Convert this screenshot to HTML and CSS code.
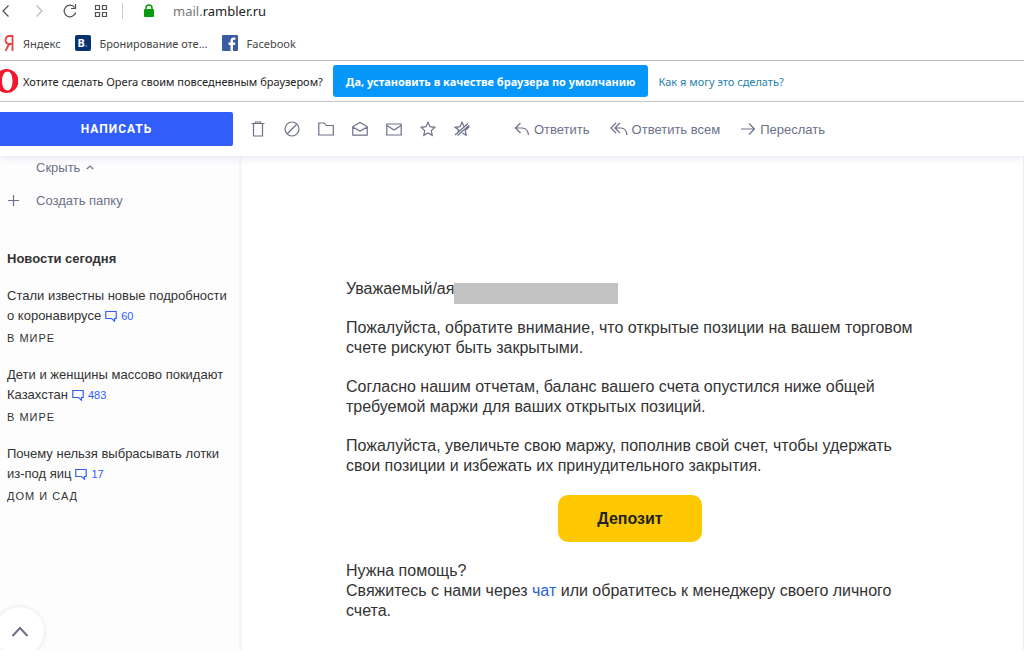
FILE: index.html
```html
<!DOCTYPE html>
<html lang="ru">
<head>
<meta charset="utf-8">
<title>Рамблер/почта</title>
<link rel="stylesheet" href="styles.css">
</head>
<body>
<header class="browser">
  <nav class="address-bar" aria-label="Навигация">
    <button class="nav-btn" aria-label="Назад"><svg width="14" height="16" viewBox="0 0 14 16"><path d="M8.500 2.500 3 8l5.500 5.500"/></svg></button>
    <button class="nav-btn nav-btn-off" aria-label="Вперёд"><svg width="14" height="16" viewBox="0 0 14 16"><path d="M4.500 2.500 10 8l-5.500 5.500"/></svg></button>
    <button class="nav-btn" aria-label="Обновить"><svg width="16" height="16" viewBox="0 0 16 16"><path d="M12.600 4.500A5.800 5.800 0 1 0 13.600 9.500M13.500 1v4.500H9"/></svg></button>
    <button class="nav-btn" aria-label="Экспресс-панель"><svg width="14" height="16" viewBox="0 0 14 16"><path d="M1.500 2.500h4v4h-4zM8.500 2.500h4v4h-4zM1.500 9.500h4v4h-4zM8.500 9.500h4v4h-4z"/></svg></button>
    <span class="divider"></span>
    <svg class="lock" width="12" height="16" viewBox="0 0 12 16"><path d="M3 7V5a3 3 0 0 1 6 0v2" fill="none" stroke="#0a9a0f" stroke-width="1.500"/><rect x="1" y="6" width="10" height="8" rx="1" fill="#0a9a0f"/></svg>
    <span class="url"><span class="url-sub">mail.</span>rambler.ru</span>
  </nav>
  <nav class="bookmarks" aria-label="Закладки">
    <a class="bookmark" href="#"><svg width="10" height="16" viewBox="0 0 10 16"><path d="M8.500 16V1H5.500C3 1 1.500 2.600 1.500 5s1.300 4 4 4h3M5 9 1.500 16" fill="none" stroke="#e8403a" stroke-width="1.800"/></svg>Яндекс</a>
    <a class="bookmark" href="#"><span class="booking">B<i>.</i></span>Бронирование оте...</a>
    <a class="bookmark" href="#"><svg width="16" height="16" viewBox="0 0 16 16"><rect width="16" height="16" rx="1" fill="#3b5ba5"/><path d="M8.500 16v-6H6.600V7.500h1.900V5.600C8.500 3.500 9.800 2.500 11.700 2.500h1.700v2.300h-1.200c-.9 0-1.200.4-1.200 1.200v1.500h2.300L13 10h-2v6z" fill="#fff"/></svg>Facebook</a>
  </nav>
  <div class="prompt">
    <svg class="opera" width="18" height="24" viewBox="0 0 18 24"><path fill-rule="evenodd" fill="#f0182d" d="M6.500 0a12 12 0 0 1 0 24a12 12 0 0 1 0-24zM7.500 2.500C4.300 2.500 2 6.500 2 12s2.300 9.500 5.500 9.500 5-4 5-9.500-1.800-9.500-5-9.500z"/></svg>
    <span class="question">Хотите сделать Opera своим повседневным браузером?</span>
    <button class="default-btn">Да, установить в качестве браузера по умолчанию</button>
    <a class="how" href="#">Как я могу это сделать?</a>
  </div>
</header>

<div class="mail">
  <div class="toolbar">
    <button class="compose">Написать</button>
    <div class="tools">
      <button class="tool" aria-label="Удалить"><svg width="16" height="16" viewBox="0 0 16 16"><path d="M1.500 2.500h13M5.500 2.500V1h5v1.500M3.500 2.500V15h9V2.500"/></svg></button>
      <button class="tool" aria-label="Спам"><svg width="16" height="16" viewBox="0 0 16 16"><circle cx="8" cy="8" r="7"/><path d="m3.500 12.500 9-9"/></svg></button>
      <button class="tool" aria-label="В папку"><svg width="16" height="16" viewBox="0 0 16 16"><path d="M.8 14V2h5.500l2 2.500h7V14z"/></svg></button>
      <button class="tool" aria-label="Прочитано"><svg width="16" height="16" viewBox="0 0 16 16"><path d="M.8 14.200V5.500L8 1.500l7.200 4v8.700zM.8 6 8 10l7.200-4"/></svg></button>
      <button class="tool" aria-label="Не прочитано"><svg width="16" height="16" viewBox="0 0 16 16"><path d="M.8 3h14.400v11H.8zM1 4.500 8 9l7-4.500"/></svg></button>
      <button class="tool" aria-label="Пометить"><svg width="16" height="16" viewBox="0 0 16 16"><path d="m8 1.200 2 4.500 4.800.6-3.500 3.300.9 4.700L8 12l-4.200 2.300.9-4.700L1.200 6.300 6 5.700z"/></svg></button>
      <button class="tool" aria-label="Снять пометку"><svg width="16" height="16" viewBox="0 0 16 16"><path d="M3.800 10.500 4.700 9 1.200 6.300 6 5.700l2-4.500 2 4.200M13 6.300h1.800l-3.500 3.300.9 4.700L8.500 12M1 14 14 2.500M3.500 14.500 15 4.500"/></svg></button>
    </div>
    <div class="actions">
      <button class="action"><svg width="16" height="14" viewBox="0 0 16 14"><path d="M6.500 1 1.500 6l5 5M1.500 6H8c4 0 6 2.500 6.500 7"/></svg>Ответить</button>
      <button class="action"><svg width="18" height="14" viewBox="0 0 18 14"><path d="M6 1 1 6l5 5M10 1 5 6l5 5M5 6h6c3.500 0 5.500 2.500 6 7"/></svg>Ответить всем</button>
      <button class="action"><svg width="16" height="14" viewBox="0 0 16 14"><path d="M1 7h13.500M9 1.500 14.500 7 9 12.500"/></svg>Переслать</button>
    </div>
  </div>

  <div class="columns">
    <aside class="sidebar">
      <button class="side-btn hide">Скрыть<svg width="8" height="6" viewBox="0 0 8 6"><path d="m.8 5 3.200-3L7.200 5"/></svg></button>
      <button class="side-btn"><svg width="13" height="13" viewBox="0 0 13 13"><path d="M6.500 1v11M1 6.500h11"/></svg>Создать папку</button>
      <section class="news">
        <h2 class="news-title">Новости сегодня</h2>
        <article class="news-item">
          <p class="headline">Стали известны новые подробности</p>
          <p class="headline headline-end">о коронавирусе <a class="comments" href="#"><svg width="12" height="12" viewBox="0 0 12 12"><path d="M.8 1.500h10.400v7H9.500v2.700L6.500 8.500H.8z"/></svg>60</a></p>
          <p class="rubric">В мире</p>
        </article>
        <article class="news-item">
          <p class="headline">Дети и женщины массово покидают</p>
          <p class="headline headline-end">Казахстан <a class="comments" href="#"><svg width="12" height="12" viewBox="0 0 12 12"><path d="M.8 1.500h10.400v7H9.500v2.700L6.500 8.500H.8z"/></svg>483</a></p>
          <p class="rubric">В мире</p>
        </article>
        <article class="news-item">
          <p class="headline">Почему нельзя выбрасывать лотки</p>
          <p class="headline headline-end">из-под яиц <a class="comments" href="#"><svg width="12" height="12" viewBox="0 0 12 12"><path d="M.8 1.500h10.400v7H9.500v2.700L6.500 8.500H.8z"/></svg>17</a></p>
          <p class="rubric">Дом и сад</p>
        </article>
      </section>
      <button class="to-top" aria-label="Наверх"><svg width="18" height="12" viewBox="0 0 18 12"><path d="m1.500 10 7.500-8 7.500 8"/></svg></button>
    </aside>
    <main class="letter">
      <div class="message">
        <p class="greeting">Уважаемый/ая<span class="redacted"></span></p>
        <p>Пожалуйста, обратите внимание, что открытые позиции на вашем торговом счете рискуют быть закрытыми.</p>
        <p>Согласно нашим отчетам, баланс вашего счета опустился ниже общей требуемой маржи для ваших открытых позиций.</p>
        <p>Пожалуйста, увеличьте свою маржу, пополнив свой счет, чтобы удержать свои позиции и избежать их принудительного закрытия.</p>
        <button class="deposit">Депозит</button>
        <p>Нужна помощь?<br>Свяжитесь с нами через <a class="chat" href="#">чат</a> или обратитесь к менеджеру своего личного счета.</p>
      </div>
    </main>
  </div>
</div>
</body>
</html>
```
FILE: styles.css
```css
* { box-sizing: border-box; }

body {
  margin: 0;
  min-height: 100vh;
  display: flex;
  flex-direction: column;
  background: #fff;
  color: #333;
  font-family: "Liberation Sans", Arial, sans-serif;
}

button {
  margin: 0;
  padding: 0;
  border: 0;
  background: none;
  font: inherit;
  color: inherit;
  cursor: pointer;
}

a { text-decoration: none; color: inherit; }
p, h2 { margin: 0; }
svg { flex: none; }

.browser { font-family: "Noto Sans", "Open Sans", sans-serif; font-size: 11px; }

.address-bar { display: flex; align-items: center; height: 22px; }
.nav-btn { width: 32px; height: 16px; display: flex; }
.nav-btn-off { width: 30px; }
.nav-btn svg { fill: none; stroke: #505050; stroke-width: 1.2; }
.nav-btn-off svg { stroke: #b8b8b8; }
.divider { width: 1px; height: 16px; margin: 0 20px 0 -4px; background: #ccc; }
.lock { margin-right: 18px; }
.url { font-size: 13px; line-height: 16px; color: #222; }
.url-sub { color: #777; }

.bookmarks { display: flex; align-items: center; gap: 14px; height: 38px; padding: 4px 4px 0; color: #444; }
.bookmark { display: flex; align-items: center; gap: 9px; }
.booking {
  width: 16px;
  height: 16px;
  border-radius: 2px;
  background: #07326f;
  color: #fff;
  font-size: 11px;
  font-weight: 700;
  line-height: 16px;
  text-align: center;
}
.booking i { color: #2f9be8; font-style: normal; }

.prompt {
  display: flex;
  align-items: center;
  height: 42px;
  border-top: 1px solid #bbb;
  border-bottom: 1px solid #bbb;
  color: #222;
}
.opera { margin-right: 5px; }
.question { margin-right: 10px; }
.default-btn {
  height: 32px;
  padding: 0 13px;
  margin-right: 10px;
  border-radius: 3px;
  background: #0797fb;
  color: #fff;
  font-weight: 700;
}
.how { color: #1f7fad; }

.mail { flex: 1; display: flex; flex-direction: column; margin-bottom: 9px; }

.toolbar {
  position: relative;
  z-index: 1;
  display: flex;
  align-items: center;
  height: 54px;
  background: #fff;
  box-shadow: 0 2px 8px #e6e6f2;
  color: #6c7189;
}
.toolbar svg, .sidebar svg { fill: none; stroke: currentColor; stroke-width: 1.2; }
.compose {
  width: 233px;
  height: 34px;
  border-radius: 0 2px 2px 0;
  background: #315efb;
  color: #fff;
  font-family: Roboto, "Liberation Sans", sans-serif;
  font-size: 12px;
  font-weight: 700;
  letter-spacing: 1px;
  text-transform: uppercase;
}
.tools { display: flex; gap: 18px; margin-left: 17px; }
.tool { display: flex; width: 16px; height: 16px; }
.actions { display: flex; gap: 20px; margin-left: 44px; font-size: 13px; }
.action { display: flex; align-items: center; gap: 4px; }

.columns { flex: 1; display: flex; }
.sidebar {
  position: relative;
  width: 242px;
  padding: 0 7px;
  border-right: 3px solid #f5f5fa;
  background: #fdfdfe;
  overflow: hidden;
}
.side-btn {
  display: flex;
  align-items: center;
  gap: 16px;
  height: 33px;
  color: #6c7189;
  font-size: 13px;
}
.hide { height: 22px; margin: 0 0 6px 29px; gap: 6px; }

.news { padding-top: 32px; }
.news-title { margin-bottom: 17px; font-size: 13px; line-height: 20px; }
.news-item { margin-bottom: 15px; }
.headline { font-size: 13px; line-height: 20px; }
.headline-end { display: flex; gap: 4px; }
.comments { display: flex; align-items: center; gap: 4px; color: #315efb; font-size: 11px; }
.rubric { font-size: 11px; line-height: 24px; letter-spacing: 1px; text-transform: uppercase; }

.to-top {
  position: absolute;
  left: -5px;
  bottom: -6px;
  width: 49px;
  height: 49px;
  display: flex;
  align-items: center;
  justify-content: center;
  border-radius: 50%;
  background: #fff;
  box-shadow: 0 0 5px #e2e2e8;
  color: #6c7189;
}
.sidebar .to-top svg { stroke-width: 2; }

.letter { flex: 1; padding: 123px 104px 0; border-right: 1px solid #ececf2; }
.message { max-width: 568px; display: flex; flex-direction: column; gap: 19px; font-size: 16px; line-height: 20px; }
.greeting { display: flex; }
.redacted { width: 164px; height: 21px; margin: 4px 0 -5px; background: #c2c2c2; }
.deposit {
  align-self: center;
  width: 144px;
  height: 47px;
  border-radius: 10px;
  background: #fdc800;
  color: #222;
  font-weight: 700;
}
.chat { color: #2a62d8; }
```
